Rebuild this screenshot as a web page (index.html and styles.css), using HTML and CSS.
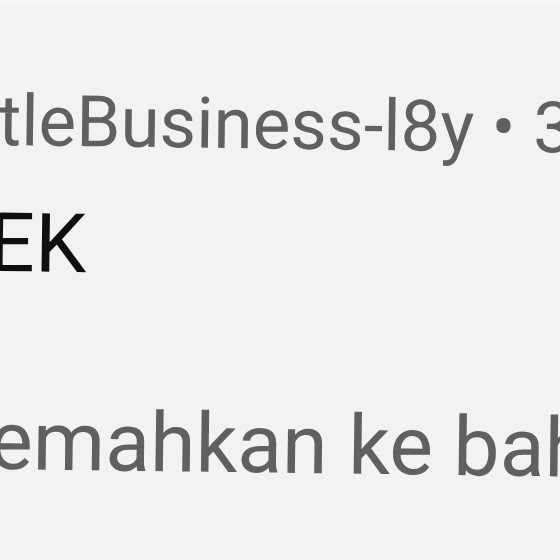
FILE: index.html
```html
<!DOCTYPE html>
<html lang="id">
<head>
  <meta charset="UTF-8"/>
  <meta name="viewport" content="width=device-width, initial-scale=1.0"/>
  <title>Komentar</title>
  <link rel="stylesheet" href="styles.css">
</head>
<body>

  <!-- Comment (zoomed in) -->
  <div class="comment">
    <div class="comment-meta">@LittleBusiness-l8y • 3 bulan lalu</div>
    <div class="comment-text">CEK</div>
    <div class="translate">Terjemahkan ke bahasa Indonesia</div>
  </div>

</body>
</html>
```

FILE: styles.css
```css
:root {
  --bg: #f2f2f2;
  --text: #0f0f0f;
  --muted: #606060;
}
* { margin:0; padding:0; box-sizing:border-box }
html, body { width:560px; height:560px; overflow:hidden }
body {
  font-family:Roboto,'Noto Sans',sans-serif;
  background:var(--bg);
  color:var(--text);
  border-top:5px solid #f7f7f7;
}

/* Comment - the shot is a little tilted */
.comment {
  white-space:nowrap;
  padding-top:74px;
  transform:rotate(0.75deg);
  transform-origin:0 50%;
}
.comment-meta {
  font-size:71px; line-height:84px;
  color:var(--muted);
  margin-left:-146px;
}
.comment-text {
  font-size:82px; line-height:96px;
  margin-top:32px;
  margin-left:-65px;
}
.translate {
  font-size:82.5px; line-height:100px;
  color:var(--muted);
  margin-top:100px;
  margin-left:-145px;
}
```
